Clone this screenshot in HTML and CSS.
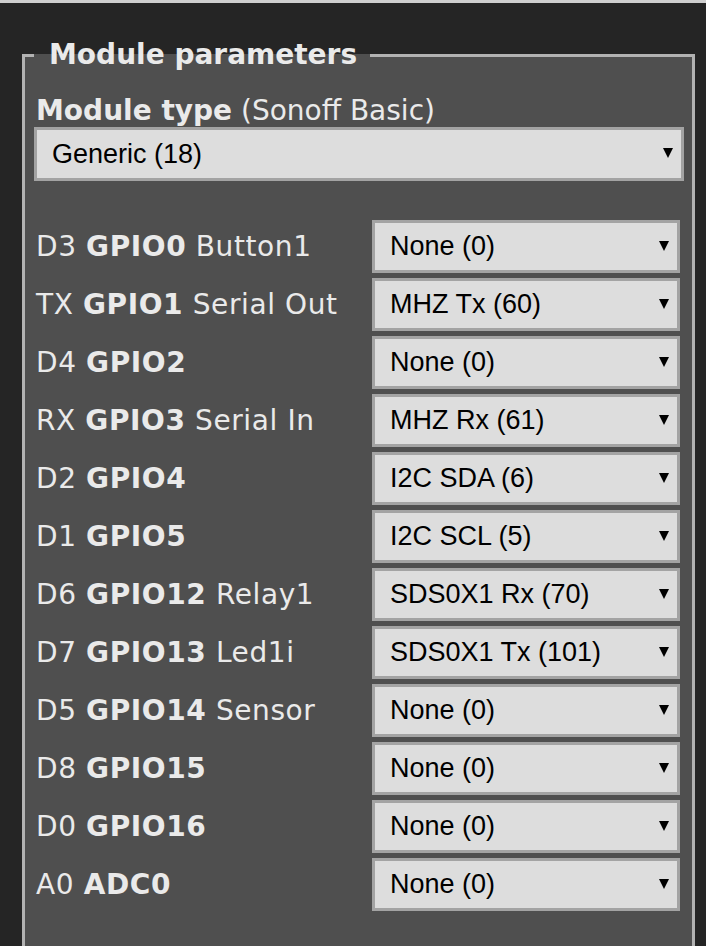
FILE: index.html
```html
<!DOCTYPE html>
<html>
<head>
<meta charset="utf-8">
<link rel="stylesheet" href="styles.css">
</head>
<body>
<div class="page">
<fieldset class="box">
<legend class="legend">Module parameters</legend>
<div class="mtype"><b>Module type</b> (Sonoff Basic)</div>
<div class="sel wide"><span class="val">Generic (18)</span></div>
<div class="grid">
<div class="lab"><span>D3 <b>GPIO0</b> Button1</span></div><div class="sel"><span class="val">None (0)</span></div>
<div class="lab"><span>TX <b>GPIO1</b> Serial Out</span></div><div class="sel"><span class="val">MHZ Tx (60)</span></div>
<div class="lab"><span>D4 <b>GPIO2</b></span></div><div class="sel"><span class="val">None (0)</span></div>
<div class="lab"><span>RX <b>GPIO3</b> Serial In</span></div><div class="sel"><span class="val">MHZ Rx (61)</span></div>
<div class="lab"><span>D2 <b>GPIO4</b></span></div><div class="sel"><span class="val">I2C SDA (6)</span></div>
<div class="lab"><span>D1 <b>GPIO5</b></span></div><div class="sel"><span class="val">I2C SCL (5)</span></div>
<div class="lab"><span>D6 <b>GPIO12</b> Relay1</span></div><div class="sel"><span class="val">SDS0X1 Rx (70)</span></div>
<div class="lab"><span>D7 <b>GPIO13</b> Led1i</span></div><div class="sel"><span class="val">SDS0X1 Tx (101)</span></div>
<div class="lab"><span>D5 <b>GPIO14</b> Sensor</span></div><div class="sel"><span class="val">None (0)</span></div>
<div class="lab"><span>D8 <b>GPIO15</b></span></div><div class="sel"><span class="val">None (0)</span></div>
<div class="lab"><span>D0 <b>GPIO16</b></span></div><div class="sel"><span class="val">None (0)</span></div>
<div class="lab"><span>A0 <b>ADC0</b></span></div><div class="sel"><span class="val">None (0)</span></div>
</div>
</fieldset>
</div>
</body>
</html>
```
FILE: styles.css
```css
html, body {
  margin: 0;
  padding: 0;
  background: #252525;
}
body {
  border-top: 3px solid #cfcfcf;
  font-family: "DejaVu Sans", Verdana, sans-serif;
  color: #eaeaea;
  overflow: hidden;
  height: 943px;
}
.page {
  padding: 37px 11px 0 22px;
}
.box {
  margin: 0;
  border: 3px solid #b2b2b2;
  background: #4f4f4f;
  padding: 0 8px 60px 9px;
  min-width: 0;
}
.legend {
  font-size: 28px;
  font-weight: bold;
  padding: 0 13px 0 15px;
  line-height: 30px;
}
.mtype {
  font-size: 28px;
  line-height: 32px;
  margin-top: 25px;
  padding-left: 2px;
}
.sel {
  position: relative;
  box-sizing: border-box;
  height: 53px;
  background: #dddddd;
  border: 3px solid #a3a3a3;
  font-family: "Liberation Sans", Arial, sans-serif;
  font-size: 27px;
  color: #000;
  display: flex;
  align-items: center;
}
.sel::after {
  content: "";
  position: absolute;
  right: 8px;
  top: 50%;
  margin-top: -6px;
  border-left: 5px solid transparent;
  border-right: 5px solid transparent;
  border-top: 10px solid #000;
}
.val {
  padding-left: 15px;
}
.wide {
  margin-top: 0;
  height: 54px;
}
.grid {
  display: grid;
  grid-template-columns: 1fr 308px;
  row-gap: 5px;
  margin-top: 39px;
  padding: 0 4px 0 2px;
}
.lab {
  font-size: 28px;
  letter-spacing: 0.6px;
  display: flex;
  align-items: center;
  white-space: nowrap;
}
```
